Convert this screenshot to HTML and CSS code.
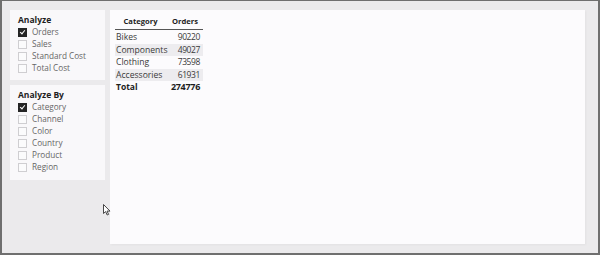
FILE: index.html
```html
<!doctype html>
<html lang="en">
<head>
    <meta charset="UTF-8" />
    <link rel="stylesheet" href="styles.css">
</head>
<body>
    <div class="frame">
        <div class="slicers">
            <div class="slicer">
                <h3 class="slicer-title">Analyze</h3>
                <ul class="slicer-list">
                    <li class="slicer-item checked"><span class="box"></span>Orders</li>
                    <li class="slicer-item"><span class="box"></span>Sales</li>
                    <li class="slicer-item"><span class="box"></span>Standard Cost</li>
                    <li class="slicer-item"><span class="box"></span>Total Cost</li>
                </ul>
            </div>
            <div class="slicer slicer-tall">
                <h3 class="slicer-title">Analyze By</h3>
                <ul class="slicer-list">
                    <li class="slicer-item checked"><span class="box"></span>Category</li>
                    <li class="slicer-item"><span class="box"></span>Channel</li>
                    <li class="slicer-item"><span class="box"></span>Color</li>
                    <li class="slicer-item"><span class="box"></span>Country</li>
                    <li class="slicer-item"><span class="box"></span>Product</li>
                    <li class="slicer-item"><span class="box"></span>Region</li>
                </ul>
            </div>
        </div>

        <div class="report">
            <table class="matrix">
                <thead>
                    <tr>
                        <th class="col-cat">Category</th>
                        <th class="col-num">Orders</th>
                    </tr>
                </thead>
                <tbody>
                    <tr><td>Bikes</td><td class="num">90220</td></tr>
                    <tr class="alt"><td>Components</td><td class="num">49027</td></tr>
                    <tr><td>Clothing</td><td class="num">73598</td></tr>
                    <tr class="alt"><td>Accessories</td><td class="num">61931</td></tr>
                    <tr class="total"><td>Total</td><td class="num">274776</td></tr>
                </tbody>
            </table>
        </div>

        <svg class="cursor" width="8" height="12" viewBox="0 0 8 12">
            <path d="M0.5 0.5 L0.5 9.5 L2.6 7.6 L4.2 11 L5.6 10.4 L4 7.1 L7 7.1 Z" fill="#fff" stroke="#333" stroke-width="0.9" stroke-linejoin="round" />
        </svg>
    </div>
</body>
</html>
```

FILE: styles.css
```css
body {
    font-family: "Open Sans", "Noto Sans", sans-serif;
    margin: 0;
    padding: 0;
}

.frame {
    position: relative;
    box-sizing: border-box;
    width: 600px;
    height: 255px;
    border: 2px solid #6f6f6f;
    border-top-width: 1px;
    background: #ebeaec;
    padding: 9px 13px 9px 8px;
    display: flex;
    gap: 5px;
}

.slicers {
    width: 95px;
    display: flex;
    flex-direction: column;
    gap: 5px;
}

.slicer {
    background: #f9f8fa;
    height: 70px;
    box-sizing: border-box;
    padding: 4px 8px 0;
}

.slicer-tall {
    height: 95px;
}

.slicer-title {
    margin: 0;
    font-size: 8.5px;
    line-height: 12px;
    font-weight: 700;
    color: #1e1e1e;
}

.slicer-list {
    list-style: none;
    margin: 0;
    padding: 0;
}

.slicer-item {
    display: flex;
    align-items: center;
    gap: 5px;
    font-size: 8.2px;
    line-height: 12px;
    color: #666;
}

.box {
    width: 9px;
    height: 9px;
    box-sizing: border-box;
    border: 1px solid #cfced1;
    background: #fbfbfc;
    position: relative;
}

.checked .box {
    background: #252525;
    border-color: #252525;
}

.checked .box::after {
    content: "";
    position: absolute;
    left: 2px;
    top: 0px;
    width: 2px;
    height: 4px;
    border-right: 1px solid #fff;
    border-bottom: 1px solid #fff;
    transform: rotate(40deg);
}

.report {
    background: #fcfbfd;
    width: 475px;
    height: 234px;
    box-sizing: border-box;
    padding: 2px 5px;
    box-shadow: 1px 1px 2px rgba(0, 0, 0, 0.04);
}

.matrix {
    border-collapse: collapse;
    table-layout: fixed;
    width: 88px;
    font-size: 8.6px;
    color: #2a2a2a;
}

.matrix th {
    font-size: 7.6px;
    font-weight: 700;
    height: 17px;
    padding: 0;
    border-bottom: 1px solid #555;
    color: #1e1e1e;
}

.matrix .col-cat {
    width: 51px;
    text-align: center;
    padding-right: 2px;
}

.matrix .col-num {
    width: 30px;
    text-align: right;
    padding-right: 5px;
}

.matrix td {
    height: 12.5px;
    line-height: 12px;
    padding: 0 0 0 1px;
    color: #3a3a3a;
    white-space: nowrap;
}

.matrix td.num {
    text-align: right;
    padding-right: 3px;
    font-size: 8.5px;
    letter-spacing: -0.4px;
}

.matrix tbody tr:first-child td {
    padding-top: 1px;
}

.matrix .alt td {
    background: #edecef;
}

.matrix .total td {
    font-size: 8.5px;
    font-weight: 700;
    color: #1e1e1e;
}

.matrix .total td.num {
    font-size: 9px;
    letter-spacing: -0.3px;
}

.cursor {
    position: absolute;
    left: 101px;
    top: 203px;
}
```
